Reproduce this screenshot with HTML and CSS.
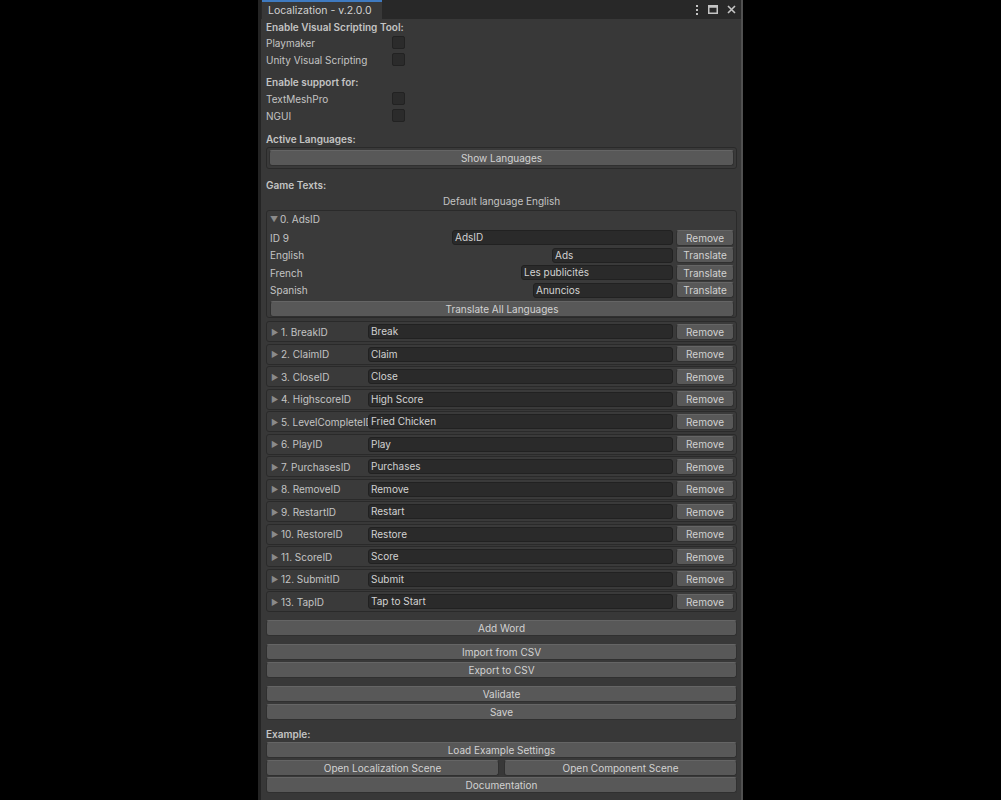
FILE: index.html
```html
<!DOCTYPE html>
<html lang="en">
<head>
    <meta charset="UTF-8">
    <meta name="viewport" content="width=device-width, initial-scale=1.0">
    <title>Localization</title>
    <link rel="stylesheet" href="styles.css">
</head>
<body>
    <div class="window">
        <div class="titlebar">
            <div class="tab">Localization - v.2.0.0</div>
            <div class="tools">
                <svg width="4" height="10" viewBox="0 0 4 10"><rect x="1" y="0" width="2" height="2" fill="#c4c4c4"/><rect x="1" y="4" width="2" height="2" fill="#c4c4c4"/><rect x="1" y="8" width="2" height="2" fill="#c4c4c4"/></svg>
                <svg width="10" height="9" viewBox="0 0 10 9"><rect x="0.75" y="0.75" width="8.5" height="7.5" fill="none" stroke="#c4c4c4" stroke-width="1.5"/><rect x="0.75" y="0.75" width="8.5" height="2" fill="#c4c4c4"/></svg>
                <svg width="9" height="9" viewBox="0 0 9 9"><path d="M1 1 L8 8 M8 1 L1 8" stroke="#c4c4c4" stroke-width="1.6"/></svg>
            </div>
        </div>

        <div class="content">
            <div class="heading first">Enable Visual Scripting Tool:</div>
            <div class="toggle"><span class="toggle-label">Playmaker</span><span class="check"></span></div>
            <div class="toggle"><span class="toggle-label">Unity Visual Scripting</span><span class="check"></span></div>

            <div class="heading gap">Enable support for:</div>
            <div class="toggle"><span class="toggle-label">TextMeshPro</span><span class="check"></span></div>
            <div class="toggle"><span class="toggle-label">NGUI</span><span class="check"></span></div>

            <div class="heading gap langs">Active Languages:</div>
            <div class="box lang-box">
                <button class="btn">Show Languages</button>
            </div>

            <div class="heading game-texts">Game Texts:</div>
            <div class="center-note">Default language English</div>

            <!-- expanded entry -->
            <div class="box entry-open">
                <div class="fold"><span class="arrow">&#9660;</span>0. AdsID</div>
                <div class="kv">
                    <span class="kv-label">ID 9</span>
                    <span class="field w-id">AdsID</span>
                    <button class="btn side">Remove</button>
                </div>
                <div class="kv">
                    <span class="kv-label">English</span>
                    <span class="field w-en">Ads</span>
                    <button class="btn side">Translate</button>
                </div>
                <div class="kv">
                    <span class="kv-label">French</span>
                    <span class="field w-fr">Les publicités</span>
                    <button class="btn side">Translate</button>
                </div>
                <div class="kv">
                    <span class="kv-label">Spanish</span>
                    <span class="field w-es">Anuncios</span>
                    <button class="btn side">Translate</button>
                </div>
                <button class="btn translate-all">Translate All Languages</button>
            </div>

            <!-- collapsed entries -->
            <div class="entries">
                <div class="box entry"><span class="entry-key"><span class="arrow">&#9654;</span>1. BreakID</span><span class="field grow">Break</span><button class="btn side">Remove</button></div>
                <div class="box entry"><span class="entry-key"><span class="arrow">&#9654;</span>2. ClaimID</span><span class="field grow">Claim</span><button class="btn side">Remove</button></div>
                <div class="box entry"><span class="entry-key"><span class="arrow">&#9654;</span>3. CloseID</span><span class="field grow">Close</span><button class="btn side">Remove</button></div>
                <div class="box entry"><span class="entry-key"><span class="arrow">&#9654;</span>4. HighscoreID</span><span class="field grow">High Score</span><button class="btn side">Remove</button></div>
                <div class="box entry"><span class="entry-key"><span class="arrow">&#9654;</span>5. LevelCompleteID</span><span class="field grow">Fried Chicken</span><button class="btn side">Remove</button></div>
                <div class="box entry"><span class="entry-key"><span class="arrow">&#9654;</span>6. PlayID</span><span class="field grow">Play</span><button class="btn side">Remove</button></div>
                <div class="box entry"><span class="entry-key"><span class="arrow">&#9654;</span>7. PurchasesID</span><span class="field grow">Purchases</span><button class="btn side">Remove</button></div>
                <div class="box entry"><span class="entry-key"><span class="arrow">&#9654;</span>8. RemoveID</span><span class="field grow">Remove</span><button class="btn side">Remove</button></div>
                <div class="box entry"><span class="entry-key"><span class="arrow">&#9654;</span>9. RestartID</span><span class="field grow">Restart</span><button class="btn side">Remove</button></div>
                <div class="box entry"><span class="entry-key"><span class="arrow">&#9654;</span>10. RestoreID</span><span class="field grow">Restore</span><button class="btn side">Remove</button></div>
                <div class="box entry"><span class="entry-key"><span class="arrow">&#9654;</span>11. ScoreID</span><span class="field grow">Score</span><button class="btn side">Remove</button></div>
                <div class="box entry"><span class="entry-key"><span class="arrow">&#9654;</span>12. SubmitID</span><span class="field grow">Submit</span><button class="btn side">Remove</button></div>
                <div class="box entry"><span class="entry-key"><span class="arrow">&#9654;</span>13. TapID</span><span class="field grow">Tap to Start</span><button class="btn side">Remove</button></div>
            </div>

            <div class="group">
                <button class="btn wide">Add Word</button>
            </div>
            <div class="group">
                <button class="btn wide">Import from CSV</button>
                <button class="btn wide">Export to CSV</button>
            </div>
            <div class="group">
                <button class="btn wide">Validate</button>
                <button class="btn wide">Save</button>
            </div>

            <div class="heading example">Example:</div>
            <div class="group tight">
                <button class="btn wide">Load Example Settings</button>
                <div class="pair">
                    <button class="btn wide">Open Localization Scene</button>
                    <button class="btn wide">Open Component Scene</button>
                </div>
                <button class="btn wide">Documentation</button>
            </div>
        </div>
    </div>
</body>
</html>
```

FILE: styles.css
```css
html, body {
    margin: 0;
    background-color: #000;
}
body {
    font-family: Inter, "Noto Sans", sans-serif;
    font-size: 10px;
    color: #c4c4c4;
}
.window {
    margin-left: 258px;
    width: 480px;
    height: 800px;
    background-color: #383838;
    border-left: 3px solid #242424;
    border-right: 2px solid #505050;
    overflow: hidden;
}
.titlebar {
    display: flex;
    align-items: flex-end;
    height: 19px;
    background-color: #282828;
}
.tab {
    margin-left: 1px;
    height: 17px;
    line-height: 18px;
    padding: 0 10px 0 6px;
    background-color: #383838;
    border-top: 2px solid #3f7ac0;
    color: #d2d2d2;
    font-size: 10.5px;
}
.tools {
    margin-left: auto;
    display: flex;
    align-items: center;
    gap: 9px;
    height: 19px;
    padding-right: 5px;
}
.content {
    padding: 0 4px 0 5px;
}
.heading {
    height: 16px;
    line-height: 16px;
    font-weight: 600;
}
.heading.first {
    height: 15px;
}
.heading.gap {
    margin-top: 6px;
}
.heading.langs {
    margin-top: 7px;
}
.toggle {
    display: flex;
    align-items: center;
    height: 17px;
}
.toggle-label {
    width: 126px;
}
.check {
    width: 11px;
    height: 11px;
    background-color: #2b2b2b;
    border: 1px solid #222;
    border-radius: 2px;
}
.box {
    background-color: #3a3a3a;
    border: 1px solid #2a2a2a;
    border-radius: 3px;
}
.lang-box {
    padding: 2px;
}
.btn {
    display: block;
    box-sizing: border-box;
    height: 16px;
    padding: 0 4px;
    font: inherit;
    color: #d2d2d2;
    background-color: #585858;
    border: 1px solid #303030;
    border-top-color: #656565;
    border-radius: 3px;
    white-space: nowrap;
}
.lang-box .btn,
.btn.translate-all,
.btn.wide {
    width: 100%;
}
.game-texts {
    margin-top: 8px;
}
.center-note {
    height: 16px;
    line-height: 16px;
    text-align: center;
}
.entry-open {
    margin-top: 1px;
    padding: 0 2px 0 3px;
    display: flex;
    flex-direction: column;
    gap: 1.5px;
}
.fold {
    height: 17px;
    line-height: 17px;
}
.arrow {
    display: inline-block;
    width: 10px;
    font-size: 8px;
    color: #8a8a8a;
    vertical-align: 1px;
}
.kv {
    display: flex;
    align-items: center;
    height: 16px;
}
.kv-label {
    flex: 1;
}
.field {
    box-sizing: border-box;
    height: 15px;
    line-height: 13px;
    padding: 0 2px;
    background-color: #2a2a2a;
    border: 1px solid #212121;
    border-radius: 3px;
    color: #d2d2d2;
    white-space: nowrap;
    overflow: hidden;
}
.w-id { width: 221px; }
.w-en { width: 121px; }
.w-fr { width: 152px; }
.w-es { width: 140px; }
.btn.side {
    margin-left: 3px;
    width: 58px;
    padding: 0;
}
.btn.translate-all {
    margin-top: 1px;
}
.entries {
    margin-top: 3.5px;
    display: flex;
    flex-direction: column;
    gap: 1.5px;
}
.entry {
    display: flex;
    align-items: center;
    box-sizing: border-box;
    height: 21px;
    padding: 0 2px 0 4px;
}
.entry-key {
    flex: none;
    width: 97px;
    white-space: nowrap;
}
.field.grow {
    flex: 1;
}
.group {
    margin-top: 8px;
    display: flex;
    flex-direction: column;
    gap: 2px;
}
.group.tight {
    margin-top: 0;
    gap: 1.5px;
}
.example {
    margin-top: 6px;
}
.pair {
    display: flex;
    gap: 5px;
}
```
